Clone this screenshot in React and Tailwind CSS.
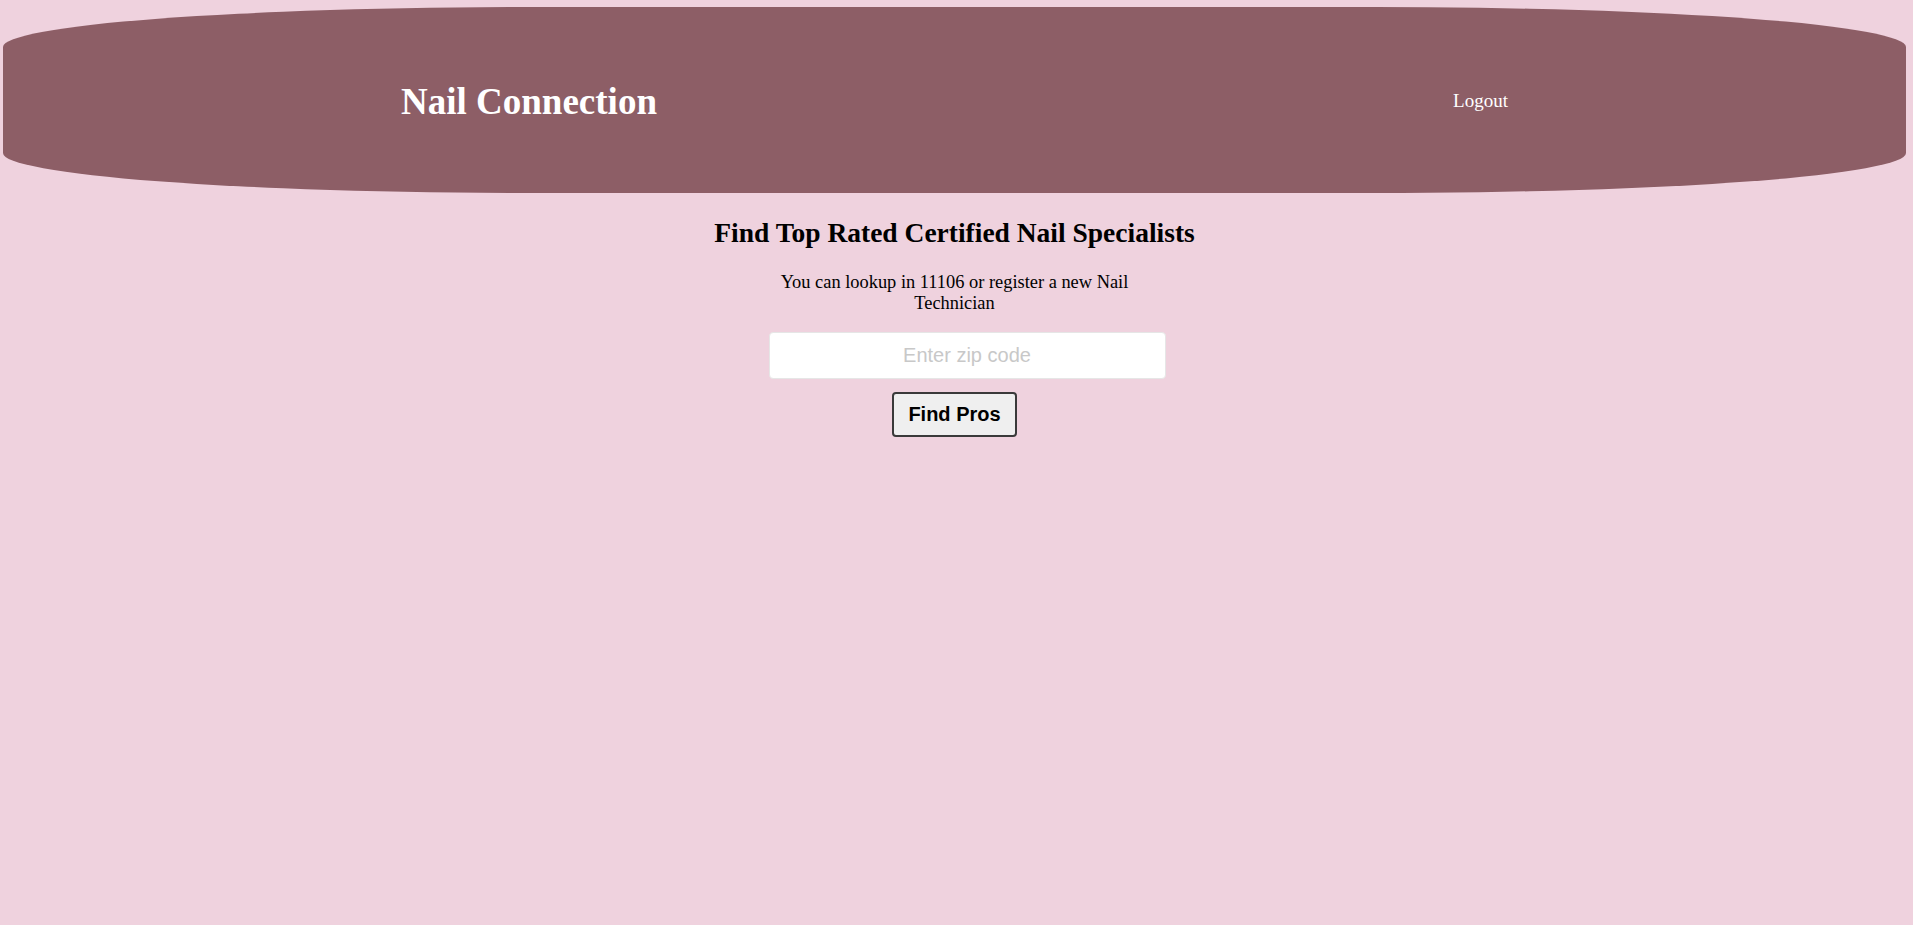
import { useState } from 'react'

function Header() {
  return (
    <header className="ml-[3px] w-[1903px] h-[186px] rounded-[530px_/_40px] bg-[#8d5e66] flex items-center justify-around">
      <h1 className="mt-[4px] text-[37px] font-bold text-white leading-[42px]">Nail Connection</h1>
      <a href="#" className="mt-[2px] text-[19px] text-white leading-[22px]">
        Logout
      </a>
    </header>
  )
}

export default function App() {
  const [zip, setZip] = useState('')

  return (
    <div className="min-h-screen pt-[7px] bg-[#efd2de] text-black font-['Liberation_Serif','Times_New_Roman',serif]">
      <Header />

      {/* search */}
      <main className="flex flex-col items-center pr-[4px]">
        <h2 className="mt-[24px] text-[27.5px] font-bold leading-[31.6px]">
          Find Top Rated Certified Nail Specialists
        </h2>
        <p className="mt-[23px] w-[390px] text-center text-[18.4px] leading-[21px]">
          You can lookup in 11106 or register a new Nail Technician
        </p>
        <input
          type="text"
          value={zip}
          onChange={(e) => setZip(e.target.value)}
          placeholder="Enter zip code"
          className="mt-[18px] ml-[25px] w-[397px] h-[47px] rounded-[4px] border border-[#e6e6e6] bg-white text-center text-[20px] font-['Liberation_Sans',Arial,sans-serif] placeholder:text-[#c8c8c8] outline-none"
        />
        <button className="mt-[13px] h-[45px] px-[14px] rounded-[4px] border-2 border-[#3a3a3a] bg-[#efefef] text-[20px] font-bold font-['Liberation_Sans',Arial,sans-serif] leading-[23px]">
          Find Pros
        </button>
      </main>
    </div>
  )
}
